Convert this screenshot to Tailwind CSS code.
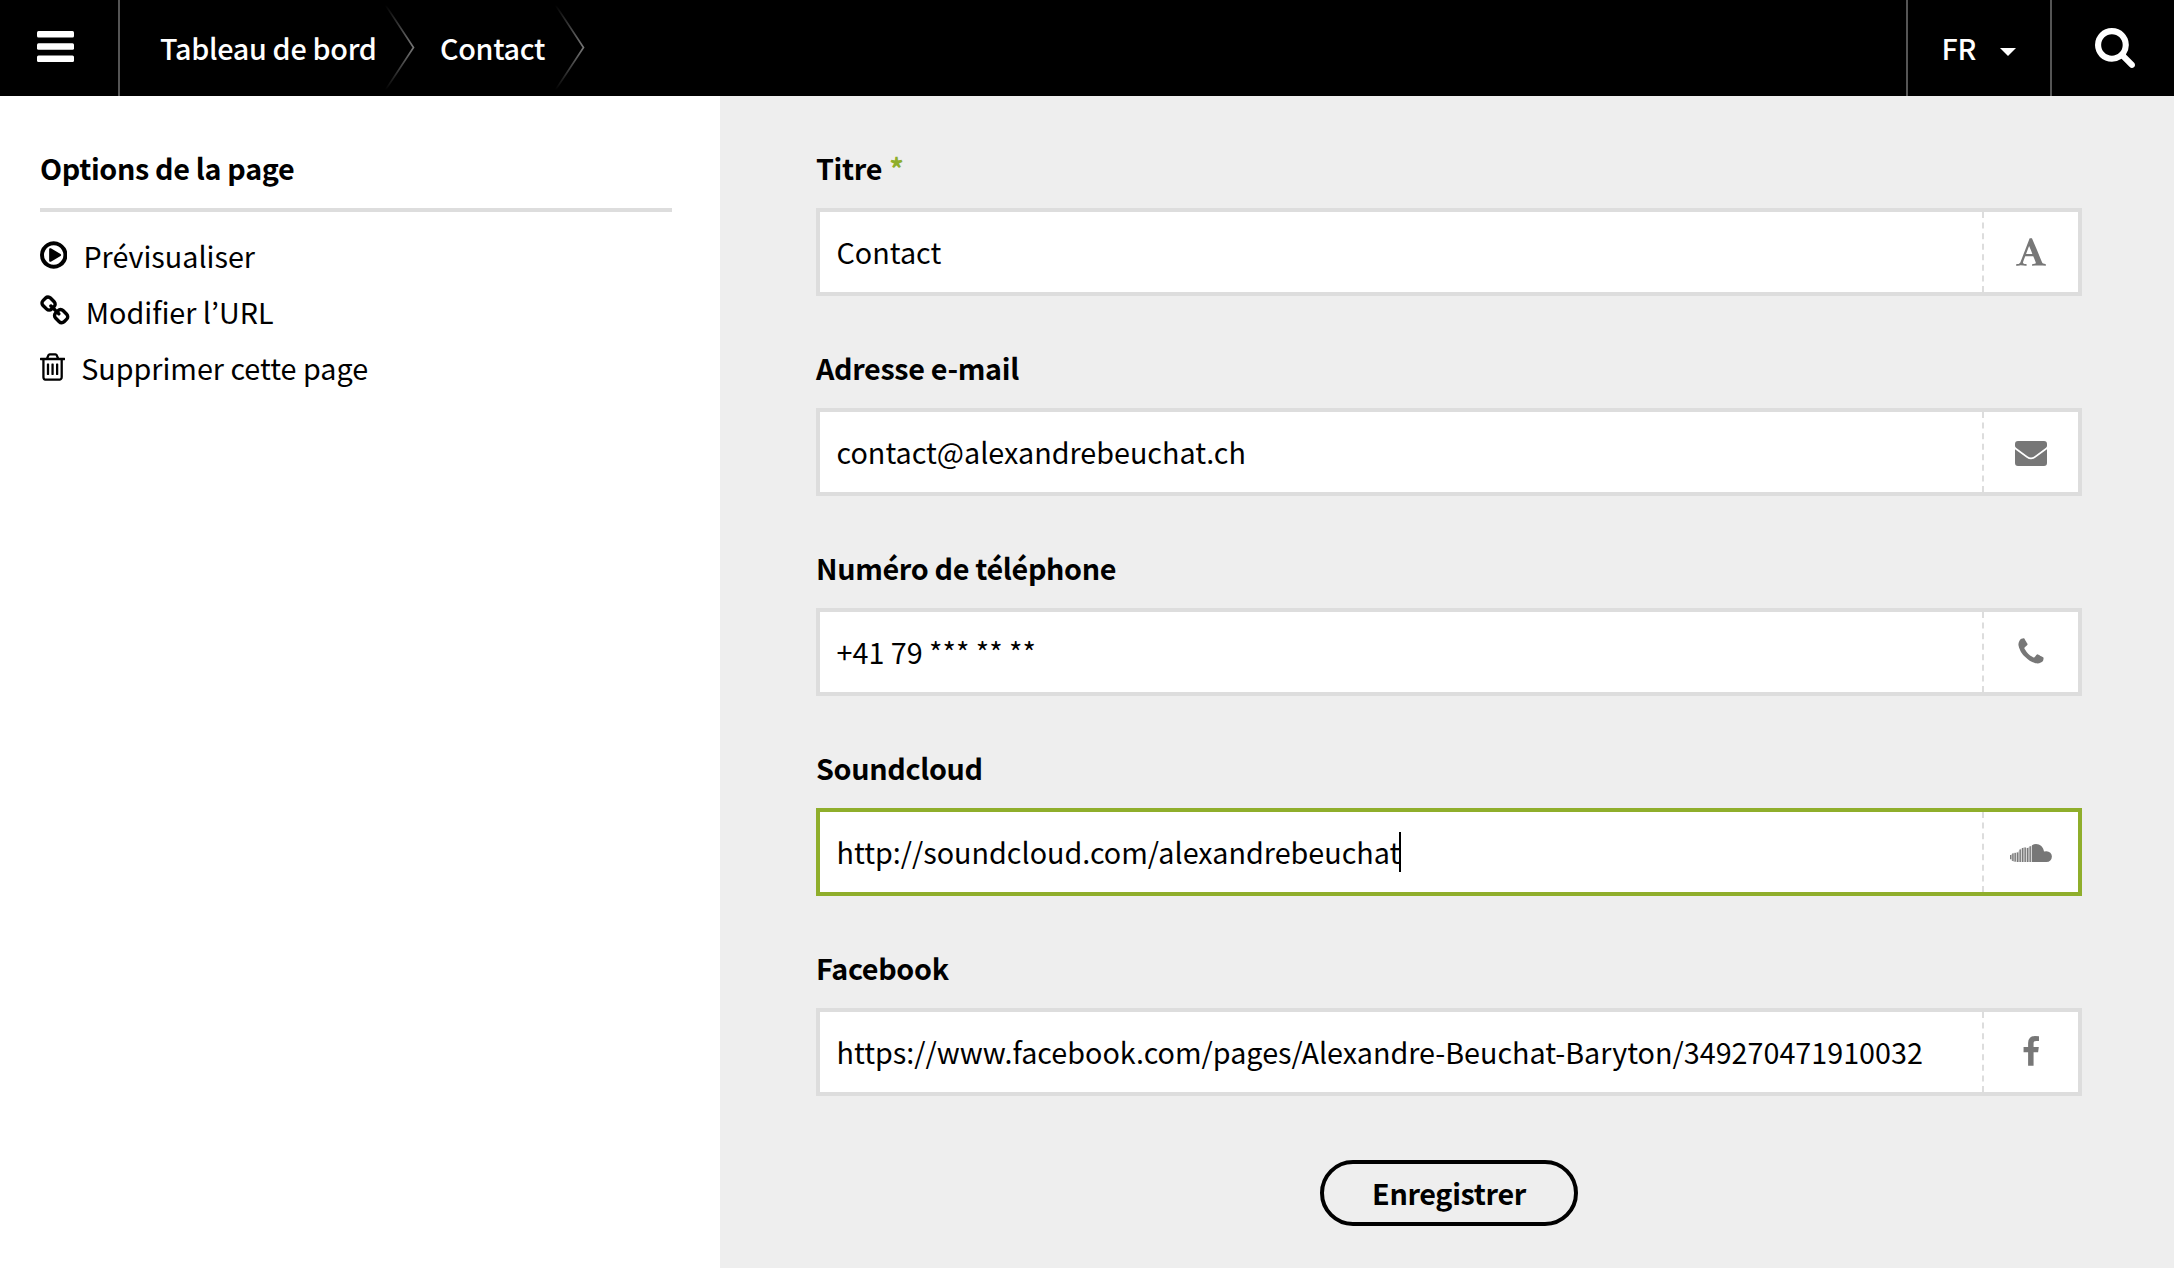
<!DOCTYPE html>
<html lang="fr">
<head>
<meta charset="utf-8">
<title>Contact</title>
<script src="https://cdn.jsdelivr.net/npm/@tailwindcss/browser@4"></script>
</head>
<body class="h-[1268px] overflow-hidden bg-white text-black text-[28.72px] leading-10 font-['Noto_Sans_CJK_KR','Source_Sans_Pro',sans-serif]">
<div class="flex h-full flex-col">
  <header class="flex h-24 shrink-0 bg-black font-medium tracking-[-0.3px] text-white">
    <button class="flex w-[120px] items-center border-r-2 border-[#555] pl-[36.5px]">
      <svg class="mb-[3px] h-[31px] w-[37px]" viewBox="0 0 37 31" fill="#fff"><rect width="37" height="6.6" rx="1.5"/><rect y="12.2" width="37" height="6.6" rx="1.5"/><rect y="24.4" width="37" height="6.6" rx="1.5"/></svg>
    </button>
    <nav class="flex flex-1 items-center pl-10">
      <a class="w-[225px] whitespace-nowrap">Tableau de bord</a>
      <svg class="h-24 w-[30px]" viewBox="0 0 30 96" fill="none">
        <linearGradient id="fade" x1="0" y1="5" x2="0" y2="90" gradientUnits="userSpaceOnUse"><stop offset="0" stop-color="#777" stop-opacity="0"/><stop offset=".5" stop-color="#777"/><stop offset="1" stop-color="#777" stop-opacity="0"/></linearGradient>
        <path d="M.5 5L28.500 47.500L.5 90" stroke="url(#fade)" stroke-width="1.700"/></svg>
      <a class="ml-[25px] w-[115px] whitespace-nowrap">Contact</a>
      <svg class="h-24 w-[30px]" viewBox="0 0 30 96" fill="none"><path d="M.5 5L28.500 47.500L.5 90" stroke="url(#fade)" stroke-width="1.700"/></svg>
    </nav>
    <button class="flex w-[144px] items-center border-l-2 border-[#555] pl-[33.5px]">
      <span class="w-[58.500px] text-left">FR</span>
      <svg class="mt-2 h-2 w-4" viewBox="0 0 16 8" fill="#fff"><path d="M0 0H16L8 8Z"/></svg>
    </button>
    <button class="flex w-[124px] items-center border-l-2 border-[#555] pl-[43px]">
      <svg class="h-10 w-10" viewBox="64 128 1664 1664" fill="#fff"><path d="M1216 832q0-185-131.500-316.500t-316.500-131.500-316.500 131.500-131.500 316.500 131.500 316.500 316.500 131.500 316.500-131.500 131.500-316.500zm512 832q0 52-38 90t-90 38q-54 0-90-38l-343-342q-179 124-399 124-143 0-273.500-55.500t-225-150-150-225-55.500-273.500 55.500-273.500 150-225 225-150 273.500-55.500 273.500 55.500 225 150 150 225 55.500 273.500q0 220-124 399l343 343q37 37 37 90z"/></svg>
    </button>
  </header>
  <div class="flex flex-1">
    <aside class="w-[720px] shrink-0 pl-10 pr-12 pt-[52px]">
      <h2 class="border-b-4 border-[#ddd] pb-5 font-bold tracking-[-0.33px]">Options de la page</h2>
      <ul class="pt-4">
        <li class="flex h-14 items-center gap-4">
          <svg class="-mt-0.5 h-8 w-[27.430px]" viewBox="128 0 1536 1792"><path d="M1312 896q0 37-32 55l-544 320q-15 9-32 9-16 0-32-8-32-19-32-56v-640q0-37 32-56 33-18 64 1l544 320q32 18 32 55zm128 0q0-148-73-273t-198-198-273-73-273 73-198 198-73 273 73 273 198 198 273 73 273-73 198-198 73-273zm224 0q0 209-103 385.500t-279.500 279.500-385.500 103-385.500-103-279.500-279.500-103-385.500 103-385.500 279.500-279.500 385.500-103 385.500 103 279.500 279.500 103 385.500z"/></svg>
          <a>Prévisualiser</a></li>
        <li class="flex h-14 items-center gap-4">
          <svg class="-mt-[3px] h-8 w-[29.710px]" viewBox="64 0 1664 1792"><path d="M1520 1216q0-40-28-68l-208-208q-28-28-68-28-42 0-72 32 3 3 19 18.500t21.500 21.500 15 19 13 25.500 3.500 27.500q0 40-28 68t-68 28q-15 0-27.500-3.500t-25.500-13-19-15-21.500-21.500-18.500-19q-33 31-33 73 0 40 28 68l206 207q27 27 68 27 40 0 68-26l147-146q28-28 28-67zm-703-705q0-40-28-68l-206-207q-28-28-68-28-39 0-68 27l-147 146q-28 28-28 67 0 40 28 68l208 208q27 27 68 27 42 0 72-31-3-3-19-18.500t-21.500-21.500-15-19-13-25.500-3.500-27.500q0-40 28-68t68-28q15 0 27.500 3.500t25.500 13 19 15 21.500 21.500 18.500 19q33-31 33-73zm895 705q0 120-85 203l-147 146q-83 83-203 83-121 0-204-85l-206-207q-83-83-83-203 0-123 88-209l-88-88q-86 88-208 88-120 0-204-84l-208-208q-84-84-84-204t85-203l147-146q83-83 203-83 121 0 204 85l206 207q83 83 83 203 0 123-88 209l88 88q86-88 208-88 120 0 204 84l208 208q84 84 84 204z"/></svg>
          <a>Modifier l’URL</a></li>
        <li class="flex h-14 items-center gap-4">
          <svg class="-mt-0.5 h-8 w-[25.140px]" viewBox="192 0 1408 1792"><path d="M704 736v576q0 14-9 23t-23 9h-64q-14 0-23-9t-9-23v-576q0-14 9-23t23-9h64q14 0 23 9t9 23zm256 0v576q0 14-9 23t-23 9h-64q-14 0-23-9t-9-23v-576q0-14 9-23t23-9h64q14 0 23 9t9 23zm256 0v576q0 14-9 23t-23 9h-64q-14 0-23-9t-9-23v-576q0-14 9-23t23-9h64q14 0 23 9t9 23zm128 724v-948h-896v948q0 22 7 40.500t14.500 27 10.500 8.500h832q3 0 10.500-8.500t14.500-27 7-40.500zm-672-1076h448l-48-117q-7-9-17-11h-317q-10 2-17 11zm928 32v64q0 14-9 23t-23 9h-96v948q0 83-47 143.500t-113 60.500h-832q-66 0-113-58.500t-47-141.500v-952h-96q-14 0-23-9t-9-23v-64q0-14 9-23t23-9h309l70-167q15-37 54-63t79-26h320q40 0 79 26t54 63l70 167h309q14 0 23 9t9 23z"/></svg>
          <a>Supprimer cette page</a></li>
      </ul>
    </aside>
    <main class="flex flex-1 flex-col bg-[#eee] pl-24 pr-[92px] pt-[52px]">
      <div class="mb-[52px]">
        <label class="mb-5 block font-bold tracking-[-0.33px]">Titre <span class="ml-px text-[#8fae2b]">*</span></label>
        <div class="flex h-[88px] items-center border-4 border-[#ddd] bg-white">
          <span class="flex-1 pl-[16.5px]">Contact</span>
          <span class="flex h-20 w-24 items-center justify-center border-l-2 border-dashed border-[#ddd]"><svg class="size-8" viewBox="0 0 1792 1792" fill="#777"><path d="M789 559l-170 450q33 0 136.500 2t160.500 2q19 0 57-2-87-253-184-452zm-725 1105l2-79q23-7 56-12.500t57-10.500 49.500-14.500 44.500-29 31-50.500l237-616 280-724h128q8 14 11 21l205 480q33 78 106 257.500t114 274.500q15 34 58 144.500t72 168.500q20 45 35 57 19 15 88 29.500t84 20.500q6 38 6 57 0 4-.5 13t-.5 13q-63 0-190-8t-191-8q-76 0-215 7t-178 8q0-43 4-78l131-28q1 0 12.500-2.500t15.500-3.500 14.500-4.500 15-6.500 11-8 9-11 2.500-14q0-16-31-96.500t-72-177.500-42-100l-450-2q-26 58-76.500 195.500t-50.500 162.500q0 22 14 37.500t43.500 24.500 48.500 13.500 57 8.500 41 4q1 19 1 58 0 9-2 27-58 0-174.500-10t-174.500-10q-8 0-26.500 4t-21.500 4q-80 14-188 14z"/></svg></span>
        </div>
      </div>
      <div class="mb-[52px]">
        <label class="mb-5 block font-bold tracking-[-0.33px]">Adresse e-mail</label>
        <div class="flex h-[88px] items-center border-4 border-[#ddd] bg-white">
          <span class="flex-1 pl-[16.5px]">contact@alexandrebeuchat.ch</span>
          <span class="flex h-20 w-24 items-center justify-center border-l-2 border-dashed border-[#ddd]"><svg class="mt-[3px] h-[25px] w-8" viewBox="0 0 32 25" fill="#777"><path d="M3 0H29Q32 0 32 3V5.200Q31.500 6.500 30 7.600L19.500 15.200Q16 17.700 12.500 15.200L2 7.600Q.5 6.500 0 5.200V3Q0 0 3 0ZM0 8.300L11.700 16.700Q16 19.700 20.300 16.700L32 8.300V22Q32 25 29 25H3Q0 25 0 22Z"/></svg></span>
        </div>
      </div>
      <div class="mb-[52px]">
        <label class="mb-5 block font-bold tracking-[-0.33px]">Numéro de téléphone</label>
        <div class="flex h-[88px] items-center border-4 border-[#ddd] bg-white">
          <span class="flex-1 pl-[16.5px]">+41 79 *** ** **</span>
          <span class="flex h-20 w-24 items-center justify-center border-l-2 border-dashed border-[#ddd]"><svg class="size-8" viewBox="0 0 1792 1792" fill="#777"><path d="M1600 1240q0 27-10 70.500t-21 68.500q-21 50-122 106-94 51-186 51-27 0-53-3.500t-57.500-12.500-47-14.500-55.500-20.500-49-18q-98-35-175-83-127-79-264-216t-216-264q-48-77-83-175-3-9-18-49t-20.500-55.500-14.500-47-12.500-57.500-3.500-53q0-92 51-186 56-101 106-122 25-11 68.500-21t70.500-10q14 0 21 3 18 6 53 76 11 19 30 54t35 63.500 31 53.500q3 4 17.500 25t21.500 35.500 7 28.500q0 20-28.500 50t-62 55-62 53-28.500 46q0 9 5 22.500t8.500 20.500 14 24 11.500 19q76 137 174 235t235 174q2 1 19 11.500t24 14 20.500 8.500 22.500 5q18 0 46-28.500t53-62 55-62 50-28.500q14 0 28.500 7t35.500 21.500 25 17.500q25 15 53.500 31t63.500 35 54 30q70 35 76 53 3 7 3 21z"/></svg></span>
        </div>
      </div>
      <div class="mb-[52px]">
        <label class="mb-5 block font-bold tracking-[-0.33px]">Soundcloud</label>
        <div class="flex h-[88px] items-center border-4 border-[#8fae2b] bg-white">
          <span class="flex flex-1 items-center pl-[16.5px]">http://soundcloud.com/alexandrebeuchat<i class="-ml-px h-10 w-0.5 bg-black"></i></span>
          <span class="flex h-20 w-24 items-center justify-center border-l-2 border-dashed border-[#ddd]"><svg class="mt-px h-[18px] w-[42px]" viewBox="0 0 42 18" fill="#777"><path d="M22 1.200Q24 0 26 0C30 0 33.500 3 34 7.500Q35 7.200 36.500 7.200A5.300 5.300 0 0 1 36.500 18H22Z"/><path d="M.7 11V15M2.900 9.500V17M5.200 9V17.500M7.700 8.500V18M10.200 5.500V18M12.700 4V18M15.200 3.500V18M17.700 4V18M20.200 2.200V18" stroke="#777" stroke-width="1.300"/><path d="M0 11.500L3 9L8 8L10 5L14 3.300L17 4L22 1.500V18H4L0 15.500Z" opacity=".3"/></svg></span>
        </div>
      </div>
      <div>
        <label class="mb-5 block font-bold tracking-[-0.33px]">Facebook</label>
        <div class="flex h-[88px] items-center border-4 border-[#ddd] bg-white">
          <span class="flex-1 pl-[16.5px]">https://www.facebook.com/pages/Alexandre-Beuchat-Baryton/349270471910032</span>
          <span class="flex h-20 w-24 items-center justify-center border-l-2 border-dashed border-[#ddd]"><svg class="size-8" viewBox="0 0 1792 1792" fill="#777"><path d="M1343 12v264h-157q-86 0-116 36t-30 108v189h293l-39 296h-254v759h-306v-759h-255v-296h255v-218q0-186 104-288.500t277-102.500q147 0 228 12z"/></svg></span>
        </div>
      </div>
      <button class="mt-16 flex h-[66px] w-[258px] items-center justify-center self-center rounded-full border-4 border-black font-bold tracking-[-0.33px]">Enregistrer</button>
    </main>
  </div>
</div>
</body>
</html>
